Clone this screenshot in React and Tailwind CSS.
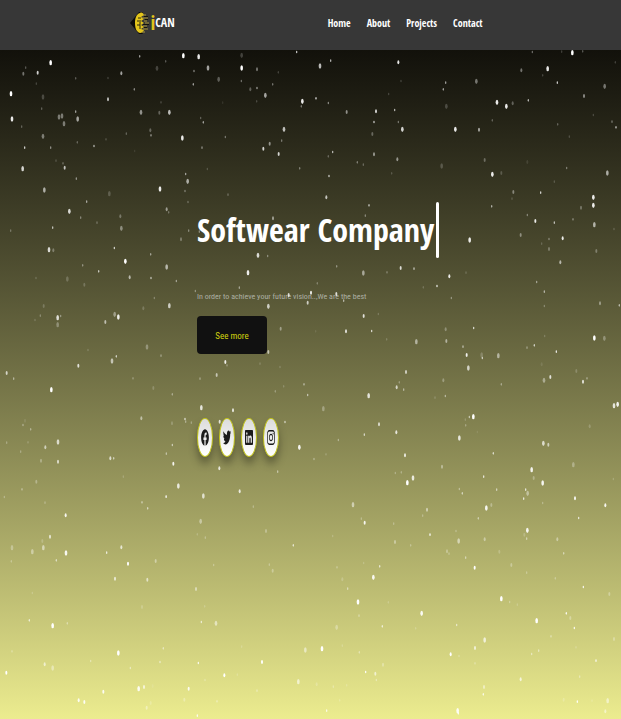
import { FaFacebook, FaTwitter, FaLinkedin, FaInstagram } from 'react-icons/fa';

const links = ['Home', 'About', 'Projects', 'Contact'];

const socials = [
  { name: 'Facebook', Icon: FaFacebook },
  { name: 'Twitter', Icon: FaTwitter },
  { name: 'LinkedIn', Icon: FaLinkedin },
  { name: 'Instagram', Icon: FaInstagram },
];

// Each star is x, y, size (1 to 3) and brightness (1 to 10) inside its sky tile.
const sky = [
  {
    x: 0,
    y: 120,
    stars: [
      [152, 68, 3, 10], [113, 98, 2, 8], [70, 101, 2, 4], [77, 83, 1, 3], [33, 161, 3, 10], [36, 237, 3, 9], [129, 171, 3, 2],
      [109, 131, 1, 2], [227, 115, 1, 3], [125, 206, 1, 3], [177, 231, 3, 4], [186, 228, 3, 4], [192, 251, 3, 4], [227, 215, 1, 6],
      [233, 237, 3, 6], [65, 260, 1, 3], [129, 289, 3, 4], [74, 323, 1, 8], [152, 323, 1, 5], [232, 307, 1, 3], [282, 318, 1, 7],
      [318, 298, 1, 2], [68, 386, 3, 8], [189, 370, 1, 3], [194, 383, 2, 7], [229, 416, 1, 5], [133, 450, 3, 6], [208, 514, 3, 8],
      [260, 485, 1, 6], [242, 533, 1, 4], [291, 548, 1, 3], [158, 563, 1, 7], [32, 572, 1, 3], [147, 629, 3, 8], [160, 631, 2, 3],
      [248, 676, 1, 4], [343, 624, 1, 8], [376, 664, 3, 10], [364, 565, 3, 4], [361, 529, 2, 3], [328, 461, 3, 2], [419, 49, 1, 6],
      [364, 100, 2, 6], [324, 178, 2, 7], [324, 114, 1, 2], [403, 148, 1, 5], [471, 85, 3, 2], [497, 64, 1, 3], [550, 47, 3, 10],
      [596, 50, 3, 9], [624, 84, 3, 6], [582, 93, 1, 5], [580, 133, 1, 6], [656, 118, 3, 3], [725, 46, 3, 2], [725, 84, 3, 10],
      [724, 123, 1, 4], [771, 88, 2, 4], [751, 148, 2, 3], [771, 144, 1, 6], [796, 166, 3, 6], [818, 133, 1, 4], [890, 36, 1, 8],
      [835, 97, 1, 2], [907, 184, 3, 9], [904, 199, 1, 4], [770, 184, 1, 2], [483, 187, 1, 2], [423, 217, 3, 5], [478, 218, 2, 3],
      [508, 217, 3, 7], [451, 271, 2, 3], [453, 286, 1, 5], [379, 281, 1, 3], [547, 294, 3, 9], [610, 247, 1, 6], [602, 234, 1, 3],
      [606, 323, 1, 5], [676, 291, 1, 4], [852, 268, 3, 7], [845, 302, 1, 4], [809, 311, 2, 5], [790, 326, 2, 8], [836, 342, 2, 8],
      [899, 385, 1, 4], [557, 402, 1, 6], [563, 424, 3, 6], [555, 453, 1, 4], [564, 486, 1, 3], [480, 447, 3, 9], [500, 508, 2, 5],
      [506, 517, 1, 3], [684, 464, 1, 3], [543, 598, 2, 3], [566, 572, 1, 4], [452, 643, 1, 5], [500, 681, 3, 6], [774, 646, 3, 8],
      [803, 648, 1, 4], [819, 535, 2, 5], [598, 575, 1, 4], [622, 387, 1, 2], [668, 188, 1, 1], [404, 333, 1, 1], [168, 362, 1, 2],
    ],
  },
  {
    x: 930,
    y: 120,
    stars: [
      [30, 78, 3, 7], [62, 62, 1, 7], [265, 67, 2, 9], [273, 123, 1, 2], [667, 36, 1, 4], [755, 35, 1, 2], [787, 38, 3, 10],
      [818, 34, 1, 3], [713, 86, 3, 9], [634, 91, 2, 4], [698, 106, 1, 2], [499, 124, 3, 4], [407, 128, 1, 6], [400, 148, 1, 6],
      [742, 128, 1, 8], [884, 139, 3, 4], [822, 168, 2, 5], [18, 175, 1, 8], [55, 189, 1, 5], [110, 216, 2, 5], [198, 214, 2, 8],
      [254, 210, 1, 7], [192, 246, 1, 8], [265, 246, 1, 4], [277, 268, 3, 8], [187, 282, 2, 3], [409, 199, 3, 2], [436, 268, 3, 9],
      [507, 269, 2, 6], [561, 187, 3, 9], [589, 199, 3, 9], [608, 190, 2, 3], [655, 181, 1, 7], [547, 241, 1, 3], [743, 253, 1, 3],
      [850, 225, 1, 2], [906, 245, 1, 4], [918, 262, 1, 7], [778, 290, 1, 2], [68, 336, 1, 7], [55, 349, 1, 3], [142, 367, 1, 4],
      [160, 374, 1, 3], [192, 343, 2, 5], [262, 358, 2, 5], [395, 378, 3, 2], [524, 360, 2, 3], [547, 403, 3, 9], [574, 399, 2, 2],
      [652, 366, 2, 1], [770, 384, 1, 4], [892, 399, 3, 6], [733, 425, 1, 2], [57, 408, 1, 8], [245, 400, 1, 2], [49, 472, 2, 7],
      [177, 496, 1, 7], [166, 527, 1, 4], [610, 456, 2, 4], [692, 458, 1, 8], [545, 499, 1, 6], [606, 476, 1, 2], [850, 472, 3, 9],
      [850, 496, 3, 9], [813, 503, 2, 3], [676, 543, 2, 9], [652, 525, 1, 4], [733, 548, 1, 7], [789, 538, 1, 4], [853, 554, 3, 6],
      [479, 600, 3, 9], [632, 585, 2, 4], [717, 597, 1, 4], [758, 595, 2, 9], [717, 627, 2, 3], [695, 611, 1, 2], [859, 633, 2, 3],
      [751, 667, 2, 6], [272, 684, 2, 8], [312, 686, 1, 7], [80, 679, 1, 4], [912, 567, 1, 2], [916, 67, 1, 2], [236, 162, 1, 2],
    ],
  },
  {
    x: 0,
    y: 810,
    stars: [
      [296, 4, 1, 7], [389, 22, 2, 6], [453, 24, 1, 7], [202, 27, 3, 2], [253, 44, 2, 2], [108, 24, 1, 2], [529, 33, 1, 5],
      [744, 8, 3, 9], [718, 53, 1, 5], [586, 63, 1, 4], [463, 84, 1, 3], [508, 107, 3, 7], [430, 115, 2, 2], [131, 108, 2, 2],
      [121, 137, 1, 3], [173, 143, 3, 8], [182, 138, 1, 4], [173, 164, 3, 3], [105, 150, 1, 2], [344, 133, 3, 4], [355, 141, 3, 9],
      [316, 156, 2, 6], [441, 231, 3, 3], [483, 257, 1, 4], [349, 259, 1, 7], [336, 273, 3, 6], [264, 240, 1, 2], [235, 287, 2, 8],
      [20, 309, 2, 7], [41, 326, 1, 5], [399, 325, 1, 3], [154, 359, 3, 10], [460, 354, 2, 2], [517, 373, 1, 4], [600, 326, 1, 4],
      [650, 315, 2, 6], [676, 276, 2, 9], [681, 286, 1, 3], [805, 109, 3, 7], [842, 176, 2, 4], [805, 246, 2, 6], [866, 75, 2, 8],
      [923, 98, 2, 7], [780, 281, 1, 2], [840, 291, 1, 2], [912, 343, 1, 5], [923, 375, 1, 6], [851, 349, 1, 2], [826, 364, 1, 3],
      [604, 413, 3, 8], [699, 421, 2, 8], [424, 445, 2, 5], [555, 447, 1, 8], [557, 455, 1, 4], [516, 460, 2, 2], [574, 458, 1, 3],
      [659, 455, 2, 8], [855, 456, 1, 7], [75, 452, 2, 1], [69, 465, 1, 4], [92, 478, 1, 4], [20, 518, 1, 3], [84, 517, 1, 2],
      [62, 545, 1, 3], [136, 532, 2, 6], [174, 516, 3, 7], [174, 575, 2, 7], [123, 572, 2, 3], [331, 565, 2, 7], [341, 565, 1, 6],
      [517, 525, 1, 6], [499, 551, 1, 5], [520, 581, 2, 9], [898, 532, 3, 9], [833, 605, 1, 5], [658, 595, 2, 8], [535, 648, 3, 8],
      [719, 664, 2, 8], [610, 678, 3, 7], [499, 680, 1, 6], [109, 635, 2, 3], [66, 658, 1, 4], [370, 620, 1, 2], [13, 681, 1, 3],
    ],
  },
  {
    x: 930,
    y: 810,
    stars: [
      [160, 9, 3, 5], [231, 7, 1, 3], [418, 19, 2, 9], [468, 8, 1, 2], [381, 48, 1, 9], [424, 84, 1, 4], [340, 52, 1, 2],
      [22, 40, 1, 3], [3, 68, 2, 9], [79, 72, 2, 8], [101, 92, 1, 6], [161, 138, 2, 8], [205, 132, 1, 2], [108, 184, 2, 8],
      [185, 183, 1, 8], [17, 184, 1, 1], [230, 208, 1, 2], [319, 215, 3, 5], [407, 178, 2, 3], [409, 213, 2, 5], [491, 174, 1, 8],
      [459, 230, 1, 6], [470, 255, 2, 9], [515, 255, 3, 2], [517, 264, 1, 7], [565, 257, 3, 5], [475, 294, 3, 7], [400, 331, 2, 3],
      [288, 306, 2, 7], [268, 337, 1, 3], [260, 352, 2, 7], [281, 359, 1, 5], [176, 377, 3, 8], [40, 416, 3, 3], [375, 383, 1, 2],
      [406, 378, 1, 5], [574, 343, 1, 4], [680, 36, 1, 5], [703, 65, 1, 6], [703, 108, 1, 3], [870, 100, 2, 4], [928, 106, 1, 6],
      [853, 204, 3, 10], [883, 205, 3, 3], [673, 226, 1, 7], [651, 233, 1, 4], [739, 245, 1, 9], [704, 198, 1, 2], [695, 283, 2, 1],
      [799, 303, 2, 2], [721, 321, 2, 8], [702, 331, 3, 4], [819, 335, 2, 8], [831, 325, 1, 4], [912, 407, 3, 8], [923, 403, 3, 9],
      [490, 440, 3, 10], [478, 441, 1, 6], [466, 449, 1, 2], [467, 466, 1, 3], [448, 504, 3, 8], [207, 463, 2, 7], [259, 487, 2, 8],
      [163, 494, 1, 7], [85, 510, 1, 4], [285, 556, 2, 8], [12, 567, 1, 4], [48, 553, 1, 2], [396, 590, 2, 4], [256, 609, 1, 3],
      [274, 607, 1, 3], [309, 624, 3, 8], [292, 638, 3, 10], [521, 620, 1, 8], [550, 550, 1, 7], [700, 520, 3, 7], [715, 524, 2, 6],
      [839, 469, 2, 2], [790, 584, 3, 3], [665, 599, 3, 9], [671, 624, 2, 3], [698, 639, 3, 9], [560, 659, 1, 6], [647, 659, 1, 8],
      [653, 670, 3, 4], [448, 657, 1, 4], [457, 670, 1, 6], [641, 686, 1, 8], [795, 685, 2, 9], [910, 627, 1, 2], [502, 486, 1, 1],
    ],
  },
  {
    x: 0,
    y: 1470,
    stars: [
      [135, 38, 1, 3], [197, 76, 2, 9], [150, 140, 2, 7], [127, 153, 2, 2], [130, 173, 3, 5], [36, 173, 3, 3], [97, 185, 3, 4],
      [34, 214, 1, 3], [169, 211, 1, 6], [198, 189, 3, 9], [364, 172, 2, 7], [320, 188, 1, 8], [384, 221, 2, 10], [426, 37, 1, 5],
      [443, 55, 1, 6], [498, 20, 1, 7], [602, 94, 3, 4], [592, 133, 1, 2], [616, 143, 1, 3], [760, 50, 1, 3], [798, 123, 2, 3],
      [880, 166, 1, 7], [808, 224, 1, 3], [818, 242, 2, 3], [641, 225, 1, 3], [467, 213, 2, 4], [345, 266, 2, 7], [442, 269, 2, 6],
      [588, 297, 2, 5], [97, 309, 1, 2], [426, 351, 2, 2], [614, 349, 1, 2], [88, 391, 1, 7], [158, 407, 3, 10], [202, 400, 1, 4],
      [604, 396, 1, 7], [648, 400, 3, 5], [355, 489, 3, 10], [490, 475, 1, 5], [36, 484, 1, 3], [272, 513, 1, 4], [134, 523, 2, 6],
      [158, 534, 3, 4], [19, 548, 2, 10], [391, 534, 1, 5], [480, 516, 1, 6], [595, 519, 1, 9], [786, 516, 2, 10], [916, 480, 3, 5],
      [725, 470, 1, 2], [673, 556, 2, 10], [895, 575, 3, 6], [615, 570, 1, 3], [712, 554, 1, 2], [310, 605, 2, 9], [416, 596, 3, 9],
      [432, 591, 2, 7], [458, 588, 2, 1], [566, 596, 2, 9], [553, 629, 2, 3], [651, 634, 1, 4], [236, 631, 2, 9], [253, 636, 2, 9],
      [440, 653, 2, 4], [452, 639, 2, 2], [592, 677, 1, 9], [771, 602, 1, 4],
    ],
  },
  {
    x: 930,
    y: 1470,
    stars: [
      [129, 44, 3, 5], [164, 98, 2, 9], [154, 86, 1, 3], [251, 101, 1, 3], [351, 59, 2, 5], [338, 77, 1, 3], [360, 134, 1, 10],
      [255, 156, 2, 4], [302, 166, 1, 3], [68, 138, 1, 2], [438, 123, 1, 3], [446, 153, 3, 5], [505, 85, 1, 5], [529, 54, 3, 9],
      [544, 45, 2, 3], [524, 148, 2, 4], [411, 184, 2, 3], [417, 191, 1, 3], [467, 203, 1, 5], [494, 233, 2, 10], [568, 185, 2, 2],
      [652, 121, 3, 9], [650, 146, 1, 5], [643, 134, 2, 2], [742, 148, 2, 4], [761, 190, 1, 5], [806, 84, 1, 8], [886, 46, 2, 9],
      [698, 39, 1, 3], [604, 225, 2, 3], [650, 248, 1, 3], [736, 265, 1, 3], [820, 291, 1, 9], [898, 312, 2, 3], [161, 219, 1, 2],
      [81, 232, 1, 3], [209, 229, 1, 7], [190, 262, 3, 9], [97, 268, 2, 2], [113, 296, 1, 5], [144, 336, 3, 10], [147, 377, 1, 4],
      [235, 337, 1, 2], [335, 370, 3, 9], [574, 326, 3, 10], [599, 336, 1, 3], [622, 344, 1, 2], [80, 412, 3, 3], [217, 409, 1, 7],
      [317, 415, 1, 2], [440, 405, 1, 6], [680, 392, 3, 10], [769, 370, 1, 9], [781, 384, 2, 3], [793, 414, 1, 9], [723, 439, 1, 4],
      [912, 447, 2, 3], [524, 450, 3, 7], [495, 474, 2, 7], [422, 493, 2, 10], [447, 498, 1, 3], [36, 476, 3, 10], [148, 487, 1, 4],
      [97, 467, 1, 2], [686, 482, 1, 5], [665, 492, 1, 5], [798, 472, 1, 2], [858, 512, 1, 9], [495, 520, 1, 3], [219, 524, 2, 3],
      [167, 546, 1, 10], [196, 551, 2, 6], [199, 570, 1, 4], [20, 583, 2, 2], [70, 590, 1, 3], [110, 586, 1, 2], [632, 568, 2, 7],
      [522, 591, 2, 5], [520, 613, 1, 8], [809, 560, 1, 4], [761, 629, 2, 2], [802, 635, 1, 10], [846, 632, 1, 2], [893, 632, 3, 5],
      [886, 664, 2, 5], [50, 662, 1, 8], [89, 631, 1, 2], [443, 662, 3, 9], [445, 670, 1, 9],
    ],
  },
];

function Stars() {
  return (
    <svg
      className="pointer-events-none absolute inset-0 h-full w-full"
      viewBox="0 150 1863 2007"
      preserveAspectRatio="none"
      fill="#fff"
      aria-hidden="true"
    >
      {sky.map((tile) => (
        <g key={`${tile.x}-${tile.y}`} transform={`translate(${tile.x} ${tile.y})`}>
          {tile.stars.map(([x, y, size, light]) => (
            <ellipse key={`${x}-${y}`} cx={x} cy={y} rx={size + 1} ry={size * 2 + 2} opacity={light / 10} />
          ))}
        </g>
      ))}
    </svg>
  );
}

function Logo() {
  return (
    <a href="#home" aria-label="iCAN" className="flex items-center">
      <svg className="h-6 w-5" viewBox="0 0 20 24" fill="none" aria-hidden="true">
        <path d="M0 12 9 1h4L5 12l8 11H9Z" fill="#0c0c0c" />
        <path d="M10 2C6 3 5 8 5 12s1 9 5 10c2 0 3-1 4-3l-3-1 3-2-3-2 3-2-3-2 3-2-3-2 3-2c-1-2-2-3-4-2Z" fill="#e3c51c" />
        <path d="M8 7h3M7 10h2M10 9v9M7 14h3" stroke="#2b2810" />
        <path d="M13 4h3M12 7h6M14 10h3M15 12h4M13 15h4M13 18h5M12 21h3" stroke="#a8963a" />
        <path d="M14 5.5h4M15 8.5h3M13 13.5h6M14 16.5h3" stroke="#111" />
      </svg>
      <span className="flex items-center leading-6">
        <span className="text-xl leading-6 text-[#dfc21c]">i</span>
        <span className="text-xs leading-6 text-white">CAN</span>
      </span>
    </a>
  );
}

export default function App() {
  return (
    <div className="flex min-h-screen flex-col font-['Open_Sans_Condensed','Roboto_Condensed','Open_Sans',sans-serif]">
      <header className="flex h-[50px] items-center justify-between bg-[#373737] px-[21%] pb-1 font-bold">
        <Logo />
        <nav>
          <ul className="flex">
            {links.map((link) => (
              <li key={link}>
                <a href={`#${link.toLowerCase()}`} className="block px-2 text-[10px] leading-4 text-white">
                  {link}
                </a>
              </li>
            ))}
          </ul>
        </nav>
      </header>

      <main className="relative flex-1 bg-linear-to-b from-[#12110b] to-[#ecec8f] pt-[150px] pr-4 pb-16 pl-[197px]">
        <h1 className="flex h-[60px] items-center text-[32px] font-bold whitespace-nowrap text-white">
          Softwear Company
          <span className="ml-0.5 h-14 w-[3px] rounded-full bg-white" />
        </h1>
        <p className="mt-[30px] font-['Roboto_Condensed','Open_Sans',sans-serif] text-[8px] leading-[14px] text-[#adb0a4]">
          In order to achieve your future vision..,We are the best
        </p>
        <Stars />
        <button
          type="button"
          className="relative mt-3 block h-[38px] w-[70px] rounded bg-[#111] pt-1 font-['Roboto_Condensed','Open_Sans',sans-serif] text-[9px] text-[#d2d20f]"
        >
          See more
        </button>
        <ul className="relative mt-16 flex gap-1.5">
          {socials.map(({ name, Icon }) => (
            <li key={name}>
              <a
                href={`#${name.toLowerCase()}`}
                aria-label={name}
                className="flex h-[39px] w-4 items-center justify-center rounded-[50%] border border-[#c3c51d] bg-linear-to-b from-[#dcdcdc] to-white text-[#1b1b1b] shadow-[0_7px_8px_rgba(0,0,0,0.35)]"
              >
                <Icon className="h-[17px] w-2" preserveAspectRatio="none" />
              </a>
            </li>
          ))}
        </ul>
      </main>
    </div>
  );
}
